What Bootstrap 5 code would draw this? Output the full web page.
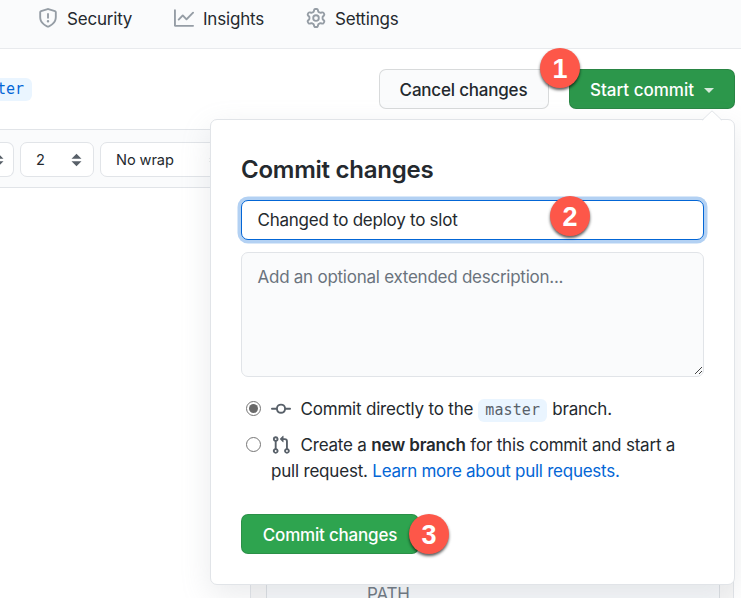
<!DOCTYPE html>
<html lang="en">
<head>
<meta charset="utf-8">
<title>Commit changes</title>
<meta name="viewport" content="width=device-width, initial-scale=1">
<link href="https://cdn.jsdelivr.net/npm/bootstrap@5.3.0/dist/css/bootstrap.min.css" rel="stylesheet">
<style>
body{font-family:Inter,"Liberation Sans",sans-serif;font-size:17px;line-height:26px;letter-spacing:-.2px;color:#24292e;height:598px;overflow:hidden;background:#fff}
svg{fill:currentColor;flex:none;display:block}
.repo-tabs{height:49px;background:#fafbfc;border-bottom:1px solid #e8eaed;padding:6px 0 0 38px}
.repo-tabs a{color:#24292e;text-decoration:none;height:26px}
.repo-tabs svg{color:#959da5;margin-right:9px}
.tab-security{width:136px}.tab-insights{width:132px}
.file-head{height:80px;padding:20px 6px 0 0}
.branch-chip{font-family:"DejaVu Sans Mono",monospace;font-size:15px;letter-spacing:0;line-height:23px;background:#eaf5ff;color:#0366d6;border-radius:0 6px 6px 0;height:23px;width:32px;padding-right:8px;margin-top:9px}
.gh-btn{height:40px;border-radius:7px;font-size:17px;line-height:26px;font-weight:500;padding:7px 20px 5px;border:1px solid rgba(27,31,35,.15);white-space:nowrap;letter-spacing:-.2px}
.btn-cancel,.btn-cancel:hover{background:#fafbfc;color:#24292e;width:170px;padding-left:19px}
.btn-start,.btn-start:hover{background:#2c974b;color:#fff;width:166px;letter-spacing:0}
.btn-commit,.btn-commit:hover{background:#2ea44f;color:#fff;width:178px}
.tri{border:5px solid transparent;border-top-color:#d5eadb;border-bottom:0;margin-left:10px}
.editor-bar{height:59px;background:#fafbfc;border-top:1px solid #e1e4e8;border-bottom:1px solid #e1e4e8;padding-top:12px;gap:6px;margin-right:7px}
.pick{height:35px;background:#fff;border:1px solid #e1e4e8;border-radius:7px;font-size:14.6px;letter-spacing:-.1px;padding:0 11px 0 15px}
.pick svg{color:#586069}
.pick-mode{width:14px;border-left:0;border-radius:0 7px 7px 0;padding:0;overflow:hidden}
.pick-mode svg{margin-left:-7px}
.pick-indent{width:74px}.pick-wrap{width:132px}
.help-side{margin:0 7px 0 250px;border:solid #e1e4e8;border-width:0 1px;background:#f6f6f6;padding:0 13px 0 15px}
.help-body{background:#f6f8fa;border:solid #d9dde1;border-width:0 1px;color:#6a737d;padding:0 0 0 100px;height:100%}
.help-body span{display:block;margin-top:393px;letter-spacing:-.2px}
.commit-menu{position:absolute;left:210px;top:119px;width:525px;height:466px;background:#fff;border:1px solid #e1e4e8;border-radius:7px;box-shadow:0 10px 30px rgba(149,157,165,.2);padding:35px 30px 0}
.menu-arrow{position:absolute;right:12px;top:-10px;color:#fff}
.menu-title{font-size:24px;line-height:30px;font-weight:600;letter-spacing:-.25px;margin:0 0 15px}
.field{border:1px solid #e1e4e8;border-radius:7px;padding:6px 16px 6px 15.5px;background:#fafbfc;font-size:17px;line-height:26px;letter-spacing:-.25px;color:#24292e;width:463px}
.field-title,.field-title:focus{height:40px;background:#fff;border-color:#0366d6;box-shadow:0 0 0 3.5px rgba(3,102,214,.3);margin-bottom:12px}
.field-note{height:125px;padding-top:11px;resize:none;display:block}
.field-note::placeholder{color:#6a737d}
.note-box{position:relative;margin-bottom:19px;width:463px}
.grip{position:absolute;right:1px;bottom:2px;color:#444}
.choice{white-space:nowrap;height:26px;color:#24292e}
.first-choice{margin-bottom:10px}
.dot{width:15px;height:15px;border:1px solid #767676;border-radius:50%;margin:0 10px 2px 5px;padding:2px;background-clip:content-box;flex:none}
.dot.picked{background-color:#6a6a6a}
.choice svg{color:#586069;margin-right:9.5px}
.code-chip{font-family:"DejaVu Sans Mono",monospace;font-size:15px;letter-spacing:.1px;background:#eaf5ff;color:#586069;border-radius:6px;width:69px;height:23px;line-height:22px;text-align:center;margin:2px 5px 0}
.second-line{padding-left:30px;margin-bottom:30px;white-space:nowrap}
.second-line a{color:#0366d6;text-decoration:none;letter-spacing:-.26px}
.callout-dot{position:absolute;width:40px;height:40px;border-radius:50%;background:#fd5749;color:#fff;font:bold 27px/42px "Liberation Sans",sans-serif;letter-spacing:0;text-align:center;box-shadow:0 2px 3px rgba(0,0,0,.65);z-index:5}
.dot-one{left:540px;top:48px}.dot-two{left:550px;top:196px}.dot-three{left:409px;top:514px}
</style>
<script src="https://cdn.jsdelivr.net/npm/bootstrap@5.3.0/dist/js/bootstrap.bundle.min.js"></script>
</head>
<body class="position-relative d-flex flex-column">
<nav class="repo-tabs d-flex flex-shrink-0">
<a href="#" class="tab-security d-flex"><svg width="20" height="25" viewBox="0 0 16 20"><path transform="translate(0 1.6)" d="M7.467.133a1.75 1.75 0 011.066 0l5.25 1.68A1.75 1.75 0 0115 3.48V7c0 1.566-.32 3.182-1.303 4.682-.983 1.498-2.585 2.813-5.032 3.855a1.7 1.7 0 01-1.33 0c-2.447-1.042-4.049-2.357-5.032-3.855C1.32 10.182 1 8.566 1 7V3.48a1.75 1.75 0 011.217-1.667l5.25-1.68zm.61 1.429a.25.25 0 00-.153 0l-5.25 1.68a.25.25 0 00-.174.238V7c0 1.358.275 2.666 1.057 3.86.784 1.194 2.121 2.34 4.366 3.297a.2.2 0 00.154 0c2.245-.956 3.582-2.104 4.366-3.298C13.225 9.666 13.5 8.36 13.5 7V3.48a.25.25 0 00-.174-.237l-5.25-1.68zM9 10.5a1 1 0 11-2 0 1 1 0 012 0zm-.25-5.75a.75.75 0 10-1.5 0v3a.75.75 0 001.5 0v-3z"/></svg><span>Security</span></a>
<a href="#" class="tab-insights d-flex"><svg width="20" height="25" viewBox="0 0 16 20"><path transform="translate(0 1.6)" d="M1.5 1.75a.75.75 0 00-1.5 0v12.5c0 .414.336.75.75.75h14.5a.75.75 0 000-1.5H1.5V1.75zm14.28 2.53a.75.75 0 00-1.06-1.06L10 7.94 7.53 5.47a.75.75 0 00-1.06 0L3.22 8.72a.75.75 0 001.06 1.06L7 7.06l2.47 2.47a.75.75 0 001.06 0l5.25-5.25z"/></svg><span>Insights</span></a>
<a href="#" class="d-flex"><svg width="20" height="25" viewBox="0 0 16 20"><path transform="translate(0 1.6)" fill-rule="evenodd" d="M7.429 1.525a6.593 6.593 0 011.142 0c.036.003.108.036.137.146l.289 1.105c.147.56.55.967.997 1.189.174.086.341.183.501.29.417.278.97.423 1.53.27l1.102-.303c.11-.03.175.016.195.046.219.31.41.641.573.989.014.031.022.11-.059.19l-.815.806c-.411.406-.562.957-.53 1.456a4.588 4.588 0 010 .582c-.032.499.119 1.05.53 1.456l.815.806c.08.08.073.159.059.19a6.494 6.494 0 01-.573.99c-.02.029-.086.074-.195.045l-1.103-.303c-.559-.153-1.112-.008-1.529.27-.16.107-.327.204-.5.29-.449.222-.851.628-.998 1.189l-.289 1.105c-.029.11-.101.143-.137.146a6.613 6.613 0 01-1.142 0c-.036-.003-.108-.037-.137-.146l-.289-1.105c-.147-.56-.55-.967-.997-1.189a4.502 4.502 0 01-.501-.29c-.417-.278-.97-.423-1.53-.27l-1.102.303c-.11.03-.175-.016-.195-.046a6.492 6.492 0 01-.573-.989c-.014-.031-.022-.11.059-.19l.815-.806c.411-.406.562-.957.53-1.456a4.587 4.587 0 010-.582c.032-.499-.119-1.05-.53-1.456l-.815-.806c-.08-.08-.073-.159-.059-.19a6.44 6.44 0 01.573-.99c.02-.029.086-.075.195-.045l1.103.303c.559.153 1.112.008 1.529-.27.16-.107.327-.204.5-.29.449-.222.851-.628.998-1.189l.289-1.105c.029-.11.101-.143.137-.146zM8 0c-.236 0-.47.01-.701.03-.743.065-1.29.615-1.458 1.261l-.29 1.106c-.017.066-.078.158-.211.224a5.994 5.994 0 00-.668.386c-.123.082-.233.09-.3.071L3.27 2.776c-.644-.177-1.392.02-1.82.63a7.977 7.977 0 00-.704 1.217c-.315.675-.111 1.422.363 1.891l.815.806c.05.048.098.147.088.294a6.084 6.084 0 000 .772c.01.147-.038.246-.088.294l-.815.806c-.474.469-.678 1.216-.363 1.891.2.428.436.835.704 1.218.428.609 1.176.806 1.82.63l1.103-.303c.066-.019.176-.011.299.071.213.143.436.272.668.386.133.066.194.158.212.224l.289 1.106c.169.646.715 1.196 1.458 1.26a8.094 8.094 0 001.402 0c.743-.064 1.29-.614 1.458-1.26l.29-1.106c.017-.066.078-.158.211-.224a5.98 5.98 0 00.668-.386c.123-.082.233-.09.3-.071l1.102.302c.644.177 1.392-.02 1.82-.63.268-.382.505-.789.704-1.217.315-.675.111-1.422-.364-1.891l-.814-.806c-.05-.048-.098-.147-.088-.294a6.1 6.1 0 000-.772c-.01-.147.039-.246.088-.294l.814-.806c.475-.469.679-1.216.364-1.891a7.992 7.992 0 00-.704-1.218c-.428-.609-1.176-.806-1.82-.63l-1.103.303c-.066.019-.176.011-.299-.071a5.991 5.991 0 00-.668-.386c-.133-.066-.194-.158-.212-.224L10.16 1.29C9.99.645 9.444.095 8.701.031A8.094 8.094 0 008 0zm1.5 8a1.5 1.5 0 11-3 0 1.5 1.5 0 013 0zM11 8a3 3 0 11-6 0 3 3 0 016 0z"/></svg><span>Settings</span></a>
</nav>

<header class="file-head d-flex justify-content-between flex-shrink-0">
<div class="branch-chip d-flex justify-content-end align-self-start">ter</div>
<div class="d-flex">
<button class="btn gh-btn btn-cancel me-3">Cancel changes</button>
<button class="btn gh-btn btn-start d-flex align-items-center ms-1"><span>Start commit</span><span class="tri"></span></button>
</div>
</header>

<div class="editor-bar d-flex flex-shrink-0">
<div class="pick pick-mode d-flex align-items-center"><svg width="11" height="14" viewBox="0 0 11 14"><path d="M.5 5.8 5.5.8 10.5 5.8zM.5 8.2l5 5 5-5z"/></svg></div>
<div class="pick pick-indent d-flex align-items-center justify-content-between"><span>2</span><svg width="11" height="14" viewBox="0 0 11 14"><path d="M.5 5.8 5.5.8 10.5 5.8zM.5 8.2l5 5 5-5z"/></svg></div>
<div class="pick pick-wrap d-flex align-items-center justify-content-between"><span>No wrap</span><svg width="11" height="14" viewBox="0 0 11 14"><path d="M.5 5.8 5.5.8 10.5 5.8zM.5 8.2l5 5 5-5z"/></svg></div>
</div>

<main class="help-side flex-grow-1 overflow-hidden"><div class="help-body"><span>PATH</span></div></main>

<section class="commit-menu">
<svg class="menu-arrow" width="20" height="11" viewBox="0 0 20 11"><path d="M0 11 10 1l10 10z"/><path d="M0 10.3 10 .8l10 9.5" fill="none" stroke="#e1e4e8"/></svg>
<h2 class="menu-title">Commit changes</h2>
<input class="form-control field field-title" value="Changed to deploy to slot" aria-label="Commit title">
<div class="note-box">
<textarea class="form-control field field-note" placeholder="Add an optional extended description..."></textarea>
<svg class="grip" width="9" height="9" viewBox="0 0 9 9"><path d="M1 8 8 1M5 8l3-3" stroke="currentColor" fill="none"/></svg>
</div>
<label class="choice first-choice d-flex align-items-center"><span class="dot picked"></span><svg width="20" height="20" viewBox="0 0 16 16"><path d="M10.5 7.75a2.5 2.5 0 11-5 0 2.5 2.5 0 015 0zm1.43.75a4.002 4.002 0 01-7.86 0H.75a.75.75 0 110-1.5h3.32a4.001 4.001 0 017.86 0h3.32a.75.75 0 110 1.5h-3.32z" fill-rule="evenodd"/></svg><span>Commit directly to the</span><span class="code-chip">master</span><span>branch.</span></label>
<label class="choice d-flex align-items-center"><span class="dot"></span><svg width="20" height="20" viewBox="0 0 16 16"><path fill-rule="evenodd" d="M7.177 3.073L9.573.677A.25.25 0 0110 .854v4.792a.25.25 0 01-.427.177L7.177 3.427a.25.25 0 010-.354zM3.75 2.5a.75.75 0 100 1.5.75.75 0 000-1.5zm-2.25.75a2.25 2.25 0 113 2.122v5.256a2.251 2.251 0 11-1.5 0V5.372A2.25 2.25 0 011.5 3.25zM11 2.5h-1V4h1a1 1 0 011 1v5.628a2.251 2.251 0 101.5 0V5A2.5 2.5 0 0011 2.5zm1 10.25a.75.75 0 111.5 0 .75.75 0 01-1.5 0zM3.75 12a.75.75 0 100 1.5.75.75 0 000-1.5z"/></svg><span>Create a <b class="fw-semibold">new branch</b> for this commit and start a</span></label>
<div class="second-line">pull request. <a href="#">Learn more about pull requests.</a></div>
<button class="btn gh-btn btn-commit">Commit changes</button>
</section>

<span class="callout-dot dot-one">1</span>
<span class="callout-dot dot-two">2</span>
<span class="callout-dot dot-three">3</span>
</body>
</html>
